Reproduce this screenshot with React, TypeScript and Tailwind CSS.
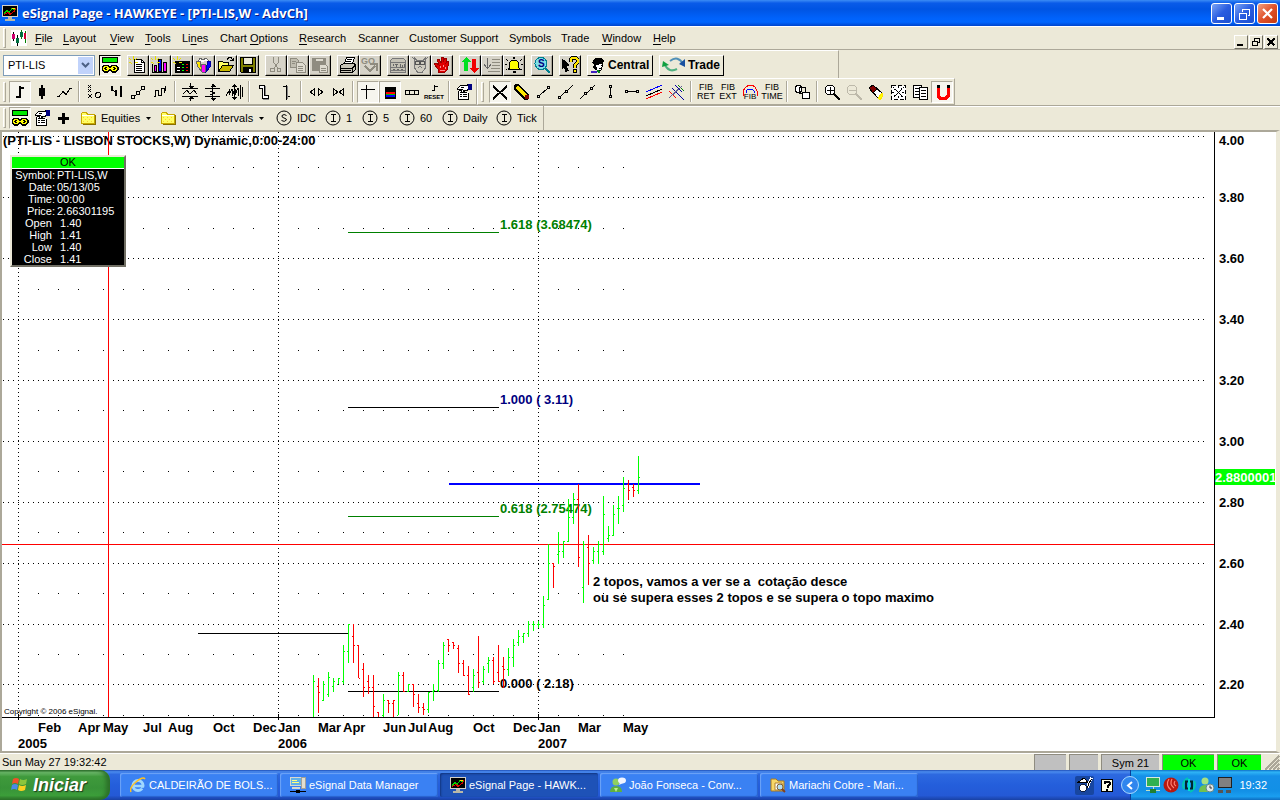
import React from "react";

type Kids = { children?: React.ReactNode };

/* ---------- drawing helpers ---------- */

function Ic({ children, w = 18, h = 18 }: Kids & { w?: number; h?: number }) {
  return (
    <svg width={w} height={h} viewBox={`0 0 ${w} ${h}`} fill="none" stroke="#000" shapeRendering="crispEdges" className="shrink-0" aria-hidden="true">
      {children}
    </svg>
  );
}

const spark = (
  <path d="M0 2l2 2M4 0v4M8 2L6 4M0 6h2M2 8l1-1M6 6h3" stroke="#e8e000" />
);

const linkIcon = (
  <Ic>
    <rect x="1.5" y="1.5" width="15" height="5" fill="#00e800" />
    <path d="M3 9h4l2 2 2-2h4l2 2v3l-2 2h-4l-2-2-2 2H3l-2-2v-3z" fill="#000" />
    <path d="M3.500 10.500h3l1 2-1 2h-3l-1-2zM11.500 10.500h3l1 2-1 2h-3l-1-2zM5 12.500h8" stroke="#ffff00" />
  </Ic>
);

const propsIcon = (
  <Ic>
    <path d="M3.500 7.500v9h10v-7M3.500 7.500h4" fill="#fff" />
    <path d="M5 9.500h2M8 9.500h4M5 11.500h2M8 11.500h4M5 13.500h2M8 13.500h4" />
    <path d="M2.500 5.500l3-3h6l2-1v5l-2 1h-3l1 2h-2l-2-3h-3z" fill="#fff" />
    <path d="M6 4.500h3M6 6.500h2" />
    <rect x="13.500" y="1.500" width="3" height="5" fill="#000080" stroke="#000080" />
  </Ic>
);

const folderIcon = (
  <Ic w={16} h={14}>
    <path d="M1.500 12.500v-10l1-1h4l1 2h7v9z" fill="#ffff66" stroke="#c9a800" />
    <path d="M2 4.500h12" stroke="#fff" />
    <path d="M3 6h1M5 8h1M7 6h1M9 8h1M11 6h1M3 10h1M7 10h1M11 10h1" stroke="#ffcc33" />
    <path d="M15.500 4v9.500h-13" stroke="#8a7000" />
  </Ic>
);

const appIcon = (
  <Ic w={16} h={16}>
    <rect x="0.500" y="0.500" width="15" height="11" fill="#000" stroke="#d4d0c8" />
    <path d="M2 8.500l3-3 2 2 3-4 3 1" stroke="#00d000" />
    <path d="M2 9.500l4-2 2 2 4-3 2-3" stroke="#e00000" />
    <path d="M10 3.500h3" stroke="#ffe000" />
    <path d="M6 12.500h4M3 14.500h10" stroke="#b8b8a8" strokeWidth="2" />
  </Ic>
);

/* ---------- toolbar pieces ---------- */

function Raised({ label, children, on }: Kids & { label: string; on?: boolean }) {
  return (
    <button
      type="button"
      aria-label={label}
      aria-pressed={on}
      className={
        on
          ? "flex h-[21px] w-[22px] shrink-0 items-center justify-center border border-t-black border-l-black border-b-white border-r-white bg-[#f5f3ea]"
          : "flex h-[21px] w-[22px] shrink-0 items-center justify-center border border-t-white border-l-white border-b-black border-r-black bg-[#d6d3c8] shadow-[inset_-1px_-1px_0_#aca899]"
      }
    >
      {children}
    </button>
  );
}

function Flat({ label, children, on }: Kids & { label: string; on?: boolean }) {
  return (
    <button
      type="button"
      aria-label={label}
      aria-pressed={on}
      className={
        on
          ? "flex h-[22px] w-[22px] shrink-0 items-center justify-center border border-t-[#aca899] border-l-[#aca899] border-b-white border-r-white bg-[#f6f5ee]"
          : "flex h-[22px] w-[22px] shrink-0 items-center justify-center"
      }
    >
      {children}
    </button>
  );
}

const Sep = () => (
  <span className="flex w-2 shrink-0 justify-center">
    <span className="h-[21px] w-0.5 border-l border-[#aca899] border-r border-r-white" />
  </span>
);

const Grip = () => <span className="h-[20px] w-[3px] shrink-0 border border-t-white border-l-white border-b-[#aca899] border-r-[#aca899]" />;

/* ---------- toolbar 1 icons ---------- */

const grey = "#8f8c80";

const mainTools: { label: string; icon: React.ReactNode }[][] = [
  [
    { label: "New page", icon: <Ic><path d="M5.500 3.500h7l3 3v10h-10z" fill="#fff" /><path d="M12.500 3.500v3h3M7 8.500h6M7 10.500h6M7 12.500h6M7 14.500h6" />{spark}</Ic> },
    { label: "New chart", icon: <Ic><path d="M1.500 8v9M1 16.500h15" /><rect x="3.500" y="9.500" width="2" height="6" fill="#ff00ff" /><rect x="7.500" y="3.500" width="3" height="12" fill="#0000ff" /><rect x="12.500" y="6.500" width="3" height="9" fill="#ff00ff" />{spark}</Ic> },
    { label: "New quote window", icon: <Ic><rect x="2" y="5" width="15" height="12" fill="#000" stroke="none" /><path d="M9 8.500h2M9 11.500h2M9 14.500h2" stroke="#00ff00" /><path d="M13 8.500h2M13 11.500h2M13 14.500h2" stroke="#ff0000" /><path d="M4 11.500h3M4 14.500h3" stroke="#fff" />{spark}</Ic> },
    { label: "Styles", icon: <Ic><path d="M3 6l2-4 3 2 3-2 3 3" fill="#fff" stroke="#666" /><path d="M1 5h4l2 11-4-5z" fill="#ffe600" stroke="#666" /><path d="M6 8h5l-1 8H7z" fill="#ff00ff" stroke="#666" /><path d="M12 5h4l-1 6-4 5 1-7z" fill="#0000ff" stroke="#0000a0" /></Ic> },
    { label: "Open", icon: <Ic><path d="M1.500 15.500v-10h4l1 1h5v3" fill="#ffff66" /><path d="M1.500 15.500l4-6h11l-4 6z" fill="#c8b800" /><path d="M10 3.500l2-2h2l2 3M13 4.500h3v-3" /></Ic> },
    { label: "Save", icon: <Ic><path d="M1.500 1.500h15v15h-14l-1-1z" fill="#808000" /><rect x="4.500" y="1.500" width="9" height="7" fill="#ece9d8" /><rect x="4.500" y="11.500" width="9" height="5" fill="#000" /><path d="M11 13v3" stroke="#fff" strokeWidth="2" /></Ic> },
  ],
  [
    { label: "Cut", icon: <Ic><path d="M6.500 1v5l4 6M11.500 1v5l-4 6" stroke={grey} /><circle cx="5.500" cy="14" r="2" stroke={grey} /><circle cx="12" cy="14" r="2" stroke={grey} /></Ic> },
    { label: "Copy", icon: <Ic><path d="M1.500 2.500h6l2 2v7h-8z" fill="#c0bdb0" stroke={grey} /><path d="M7.500 6.500h6l3 3v7h-9z" fill="#dedbd0" stroke={grey} /><path d="M9 10.500h5M9 12.500h5M9 14.500h5M3 5.500h4M3 7.500h3" stroke={grey} /></Ic> },
    { label: "Paste", icon: <Ic><rect x="1.500" y="2.500" width="13" height="12" fill={grey} stroke={grey} /><path d="M5 3.500h7" stroke="#dedbd0" strokeWidth="2" /><path d="M8.500 8.500h6l2 2v6h-8z" fill="#dedbd0" stroke={grey} /><path d="M10 12.500h5M10 14.500h5" stroke={grey} /></Ic> },
  ],
  [
    { label: "Print", icon: <Ic><path d="M5.500 7.500l2-6h8l-2 6" fill="#fff" /><path d="M8 3.500h5M7 5.500h5" /><path d="M1.500 9.500l3-2h10l2 1v5l-3 3h-12z" fill="#c8c5b8" /><path d="M2 12.500h11l3-3M2 14.500h10M13.500 12v4" /></Ic> },
    { label: "Go", icon: <Ic><text x="0" y="8" fontSize="9" fontWeight="bold" fontFamily="Liberation Sans, sans-serif" fill={grey} stroke="none">GO</text><path d="M4 10l5 5 5-5M9 8h7v7" stroke={grey} strokeWidth="2" /></Ic> },
  ],
  [
    { label: "Quote board", icon: <Ic><path d="M1.500 4.500l2-2h11l2 2v12h-15z" fill="#c5c2b6" stroke="#777" /><path d="M2 6.500h14M2 11.500h14M2 14.500h14" stroke="#777" /><path d="M4 8v2M6 8h3M7.500 8v3M11 8v3h2V9M15 8v3M4 13.500h2M8 13.500h2M12 13.500h2" stroke="#666" /></Ic> },
    { label: "Owl", icon: <Ic><path d="M3.500 2l2 2h7l2-2v10l-3 4h-5l-3-4z" fill="#cfccc0" stroke="#777" /><circle cx="6.500" cy="7" r="2" stroke="#555" /><circle cx="11.500" cy="7" r="2" stroke="#555" /><path d="M7 12l2-2 2 2M1 1l3 3M17 1l-3 3" stroke="#777" /></Ic> },
    { label: "Stop", icon: <Ic><path d="M5 16V13L1 8l2-1 3 2-2-6h2l2 4V1h2v5l2-4h2l-1 5 2-2 1 1-2 8-2 2z" fill="#e00000" stroke="#900" /><path d="M7 10v2M10 9v2M12 11v2M7 14h5" stroke="#ff9090" /></Ic> },
  ],
  [
    { label: "Up and down", icon: <Ic><path d="M5 1l5 5H7v9H3V6H0z" fill="#00e020" stroke="none" /><path d="M13 17l5-5h-3V3h-4v9H8z" fill="#f00000" stroke="none" /></Ic> },
    { label: "Sort list", icon: <Ic><path d="M4.500 2v10M1 8.500l3.500 4L8 8.500" stroke="#666" /><path d="M9 3.500h8M9 6.500h8M9 9.500h8M8 12.500h9M5 15.500h12" stroke={grey} /></Ic> },
    { label: "Alerts", icon: <Ic><path d="M3.500 13.500l1-2V7l2-3h5l2 3v4.500l2 2z" fill="#ffff00" /><path d="M9 1v2M8 15.500h3" strokeWidth="2" /><path d="M1 3l2 2M17 3l-2 2M0 8.500h2M16 8.500h2M1 14l1-1M17 14l-1-1" /></Ic> },
  ],
  [{ label: "Symbol search", icon: <Ic><circle cx="8" cy="7.500" r="6" fill="#7fdfe8" stroke="#008090" /><path d="M12 12l5 5" stroke="#008090" strokeWidth="2" /><text x="5" y="11" fontSize="10" fontWeight="bold" fontFamily="Liberation Sans, sans-serif" fill="#000080" stroke="none">S</text></Ic> }],
  [{ label: "Context help", icon: <Ic><path d="M1 3l7 6-3 .5 2 5-2 1-2-5-2 2z" fill="#000" /><path d="M9.500 6V3.500l2-2h3l2 2v3l-3 3v2" stroke="#000" strokeWidth="4" /><path d="M9.500 6V3.500l2-2h3l2 2v3l-3 3v2" stroke="#ffe600" strokeWidth="2" /><rect x="12.500" y="13.500" width="3" height="3" fill="#ffe600" /></Ic> }],
];

/* ---------- toolbar 2 icons ---------- */

const fib = (a: string, b: string) => (
  <span className="flex flex-col items-center font-['Liberation_Sans_Narrow','Liberation_Sans',sans-serif] text-[9px] leading-[9px] text-black">
    <span>{a}</span>
    <span>{b}</span>
  </span>
);

type T = { label: string; icon: React.ReactNode; on?: boolean };

const styleTools: T[][] = [
  [
    { label: "Bar chart", on: true, icon: <Ic><path d="M9 3v12M5 14h4M9 5h4" strokeWidth="2" /></Ic> },
    { label: "Candle chart", icon: <Ic><rect x="6" y="5" width="6" height="8" fill="#000" stroke="none" /><path d="M9 2v14" strokeWidth="2" /></Ic> },
    { label: "Line chart", icon: <Ic><path d="M2 13.500h2l4-5 3 3 4-6h2" /></Ic> },
  ],
  [
    { label: "Point and figure", icon: <Ic><path d="M3 2l3 3M6 2L3 5M3 6l3 3M6 6l-3 3M3 11l4 4M7 11l-4 4" /><circle cx="13" cy="12" r="2.500" /></Ic> },
    { label: "Histogram lines", icon: <Ic><path d="M5 3v5M9 7v6M14 3v11" strokeWidth="2" /><path d="M6 7l3 3" /></Ic> },
    { label: "Swing", icon: <Ic><rect x="2.500" y="12.500" width="3" height="3" /><rect x="7.500" y="8.500" width="3" height="3" /><rect x="12.500" y="3.500" width="3" height="3" /><path d="M6 13l2-2M10 9l2-2" /></Ic> },
    { label: "Step", icon: <Ic><path d="M3 13.500h1.500v-6h3v5h3v-7h3v4M13.500 7.500h1V3" /></Ic> },
  ],
  [
    { label: "Compress vertical", icon: <Ic><path d="M1 5.500h16M1 13.500h16M2 11l4-4 3 4 4-4 3 4M9.500 0v4M9.500 18v-4" /><path d="M7 3h6l-3 3zM7 16h6l-3-3z" fill="#000" stroke="none" /></Ic> },
    { label: "Expand vertical", icon: <Ic><path d="M2 5.500h15M2 13.500h15M9.500 1v16M7 8l5 2-5 2" /><path d="M7 4h6l-3-3zM7 15h6l-3 3z" fill="#000" stroke="none" /></Ic> },
    { label: "Auto scale", icon: <Ic><path d="M1 13l3-5v4l3-6v7l3-7v6l3-7v8M15.500 2v14M17.500 4v10M9.500 2v14" /><path d="M7 4h5L9.500 1zM7 14h5l-2.500 3z" fill="#000" stroke="none" /></Ic> },
  ],
  [
    { label: "Wide bars", icon: <Ic><path d="M4.500 2.500h5v10h4v3h-6v-10h-3z" fill="#fff" /><path d="M10.500 3v9M8 16.500h6" stroke="#888" /></Ic> },
    { label: "Thin bars", icon: <Ic><path d="M9.500 2v15M6 3.500h3M10 13.500h3" /><path d="M10.500 3v13" stroke="#888" /></Ic> },
  ],
  [
    { label: "Spread bars", icon: <Ic><path d="M7.500 5.500v7l-4-3.500zM11.500 5.500v7l4-3.500z" /></Ic> },
    { label: "Narrow bars", icon: <Ic><path d="M4.500 5.500v7l4-3.500zM14.500 5.500v7l-4-3.500z" /></Ic> },
  ],
  [
    { label: "Crosshair", on: true, icon: <Ic><path d="M2 6.500h14M7.500 2v14" /></Ic> },
    { label: "Colours", on: true, icon: <Ic><rect x="4" y="4" width="11" height="12" fill="#000" stroke="none" /><rect x="5" y="9" width="9" height="2" fill="#ff0000" stroke="none" /><rect x="5" y="11" width="9" height="1" fill="#00c000" stroke="none" /><rect x="5" y="12" width="9" height="2" fill="#0000ff" stroke="none" /></Ic> },
    { label: "Panels", icon: <Ic><path d="M2.500 7.500h13v4h-13zM6.500 8v3M11.500 8v3" /></Ic> },
    { label: "Reset", icon: <Ic w={22}><path d="M11.500 2v6M9 7.500h2M12 3.500h3" /><text x="11" y="16" fontSize="6" fontWeight="bold" textAnchor="middle" fontFamily="Liberation Sans Narrow, Liberation Sans, sans-serif" fill="#000" stroke="none">RESET</text></Ic> },
  ],
  [{ label: "Properties", icon: propsIcon }],
];

const drawTools: T[][] = [
  [
    { label: "Pointer", on: true, icon: <Ic><path d="M2 3l14 13M16 3L2 16" strokeWidth="2" /></Ic> },
    { label: "Pencil", icon: <Ic><path d="M2 1h3l11 11v3l-2 2h-3L1 6V3z" fill="#000" stroke="none" /><path d="M4 4l9 9" stroke="#ffe600" strokeWidth="4" /><rect x="12" y="12" width="4" height="4" fill="#800000" stroke="none" /></Ic> },
    { label: "Segment", icon: <Ic><rect x="2.500" y="12.500" width="2" height="2" /><rect x="12.500" y="3.500" width="2" height="2" /><path d="M5 12l7-6" /></Ic> },
    { label: "Ray", icon: <Ic><rect x="1.500" y="13.500" width="2" height="2" /><rect x="8.500" y="7.500" width="2" height="2" /><path d="M4 13l4-4M11 7l5-5" /></Ic> },
    { label: "Line", icon: <Ic><path d="M1 16l4-4M8 10l3-3M13 5l3-3" /><rect x="5.500" y="9.500" width="2" height="2" /><rect x="11.500" y="4.500" width="2" height="2" /></Ic> },
    { label: "Vertical line", icon: <Ic><rect x="8.500" y="2.500" width="2" height="2" /><rect x="8.500" y="12.500" width="2" height="2" /><path d="M9.500 5v8" /></Ic> },
    { label: "Horizontal line", icon: <Ic><rect x="2.500" y="7.500" width="2" height="2" /><rect x="13.500" y="7.500" width="2" height="2" /><path d="M5 8.500h8" /></Ic> },
    { label: "Regression", icon: <Ic><path d="M1 9l16-7" stroke="#0000ff" /><path d="M1 13l16-7" stroke="#000" /><path d="M1 16l16-7" stroke="#ff0000" /></Ic> },
    { label: "Pitchfork", icon: <Ic><path d="M2 8l7 7" stroke="#ff0000" /><path d="M5 5l12 12M8 2l7 7" stroke="#0000a0" /><path d="M11 2l6 6" stroke="#008000" /><path d="M2 15L15 3" stroke="#606090" /></Ic> },
  ],
  [
    { label: "Fibonacci retracement", icon: fib("FIB", "RET") },
    { label: "Fibonacci extension", icon: fib("FIB", "EXT") },
    { label: "Fibonacci circle", icon: <Ic><path d="M2 13V8l3-4 3-2h3l3 2 2 4v5" stroke="#ff0000" /><path d="M5 10V8l2-2h4l2 2v2" stroke="#0000ff" /><text x="9" y="16" fontSize="8" textAnchor="middle" fontFamily="Liberation Sans Narrow, Liberation Sans, sans-serif" fill="#000" stroke="none">FIB</text></Ic> },
    { label: "Fibonacci time", icon: fib("FIB", "TIME") },
  ],
  [{ label: "Shapes", icon: <Ic><circle cx="5.500" cy="6" r="3.500" fill="#fff" /><rect x="6.500" y="4.500" width="6" height="6" /><rect x="9.500" y="9.500" width="7" height="6" fill="#fff" /></Ic> }],
  [
    { label: "Zoom in", icon: <Ic><circle cx="7" cy="7" r="5" fill="#fff" /><path d="M4 7.500h7M7.500 4v7" /><path d="M11 11l6 6" strokeWidth="2" /></Ic> },
    { label: "Zoom out", icon: <Ic><circle cx="7" cy="7" r="5" stroke="#bdb9aa" /><path d="M4 7.500h7" stroke="#bdb9aa" /><path d="M11 11l6 6" stroke="#bdb9aa" strokeWidth="2" /></Ic> },
    { label: "Eraser", icon: <Ic><path d="M2 5l4-3 10 9-4 5z" fill="#fff" /><path d="M2 5l4-3 4 4-4 4z" fill="#800000" /><path d="M11 15l4-5 1 3-3 4z" fill="#ffff00" stroke="#ffe600" /></Ic> },
    { label: "Tile", icon: <Ic><rect x="2.500" y="2.500" width="14" height="14" fill="#fff" strokeDasharray="4 2" /><path d="M4 4l11 11M15 4L4 15M9.500 3v3M9.500 13v3M3 9.500h3M13 9.500h3M5 7l2-2M12 5l2 2M5 12l2 2M12 14l2-2" strokeDasharray="2 1" /></Ic> },
    { label: "Copy notes", icon: <Ic><path d="M2.500 2.500h8v12h-8z" fill="#fff" /><path d="M4 5h5M4 8h4M4 11h4" /><path d="M8.500 4.500h8v12h-8z" fill="#fff" /><path d="M10 8l2-1h3M10 11l2-1h3M10 14l2-1h3" /></Ic> },
    { label: "Magnet", on: true, icon: <Ic><path d="M5 3v10l2 2h6l2-2V3" stroke="#ff0000" strokeWidth="3" /><path d="M5 2v3M15 2v3" strokeWidth="3" /></Ic> },
  ],
];

function ToolGroups({ groups }: { groups: T[][] }) {
  return (
    <>
      {groups.map((g, i) => (
        <React.Fragment key={i}>
          {i > 0 && <Sep />}
          {g.map((t) => (
            <Flat key={t.label} label={t.label} on={t.on}>{t.icon}</Flat>
          ))}
        </React.Fragment>
      ))}
    </>
  );
}

/* ---------- header ---------- */

function TitleBar() {
  return (
    <header className="flex h-[26px] shrink-0 items-center bg-[linear-gradient(180deg,#3c8cf5_0%,#0a5be8_12%,#0054e3_35%,#0062fb_70%,#0066ff_85%,#0045cc_100%)] pr-0.5 pl-0.5">
      {appIcon}
      <h1 className="flex-1 pl-1 font-['Open_Sans','Noto_Sans',sans-serif] text-[13px] leading-[20px] font-bold text-white [text-shadow:1px_1px_0_#0a1883]">
        eSignal Page - HAWKEYE - [PTI-LIS,W - AdvCh]
      </h1>
      <div className="flex gap-0.5">
        <button type="button" aria-label="Minimize" className="flex size-[21px] items-center justify-center rounded-[3px] border border-white bg-[linear-gradient(135deg,#7ba4f5,#2a5de0_50%,#1c4fd0)]">
          <Ic w={15} h={15}><path d="M3 12.500h7" stroke="#fff" strokeWidth="3" /></Ic>
        </button>
        <button type="button" aria-label="Restore" className="flex size-[21px] items-center justify-center rounded-[3px] border border-white bg-[linear-gradient(135deg,#7ba4f5,#2a5de0_50%,#1c4fd0)]">
          <Ic w={15} h={15}><path d="M5 3h8M5.500 3v3M12.500 3v6h-2M2 7h8M2.500 7v6h7V7" stroke="#fff" /></Ic>
        </button>
        <button type="button" aria-label="Close" className="flex size-[21px] items-center justify-center rounded-[3px] border border-white bg-[linear-gradient(135deg,#f0a080,#e0512a_50%,#c53a10)]">
          <svg width="15" height="15" viewBox="0 0 15 15" aria-hidden="true"><path d="M3 3l9 9M12 3l-9 9" stroke="#fff" strokeWidth="2.200" /></svg>
        </button>
      </div>
    </header>
  );
}

const menus: [string, string, string, string][] = [
  ["", "F", "ile", "w-[28px]"],
  ["", "L", "ayout", "w-[47px]"],
  ["", "V", "iew", "w-[35px]"],
  ["", "T", "ools", "w-[37px]"],
  ["Li", "n", "es", "w-[38px]"],
  ["Chart ", "O", "ptions", "w-[79px]"],
  ["", "R", "esearch", "w-[59px]"],
  ["Scanner", "", "", "w-[51px]"],
  ["Customer Support", "", "", "w-[100px]"],
  ["Symbols", "", "", "w-[52px]"],
  ["Trade", "", "", "w-[41px]"],
  ["", "W", "indow", "w-[51px]"],
  ["", "H", "elp", "w-[28px]"],
];

const mdiBtn = "flex size-[14px] items-center justify-center border border-t-white border-l-white border-b-[#716f64] border-r-[#716f64]";

function MenuBar() {
  return (
    <nav className="flex h-[24px] shrink-0 items-center border-t border-b border-t-white border-b-[#aca899] pr-0.5 pl-[3px]">
      <Grip />
      <span className="ml-[5px] mr-2 flex bg-white">
        <Ic w={16} h={16}>
          <path d="M2.500 2v9M6.500 5v11" stroke="#000" /><path d="M10.500 0v9M14.500 1v12" stroke="#008000" />
          <path d="M2.500 4v5" stroke="#d0006f" strokeWidth="3" /><path d="M6.500 8v5M10.500 2v5" stroke="#007040" strokeWidth="3" /><path d="M14 3v6" stroke="#d00030" strokeWidth="2" />
        </Ic>
      </span>
      <ul className="flex flex-1">
        {menus.map(([a, u, b, w]) => (
          <li key={a + u + b} className={w + " shrink-0"}>
            <button type="button" className="whitespace-pre">{a}{u && <span className="underline underline-offset-2">{u}</span>}{b}</button>
          </li>
        ))}
      </ul>
      <div className="flex gap-px self-end">
        <button type="button" aria-label="Minimize chart" className={mdiBtn}><Ic w={10} h={10}><path d="M1 8h6" strokeWidth="2" /></Ic></button>
        <button type="button" aria-label="Restore chart" className={mdiBtn}><Ic w={10} h={10}><path d="M3 1h6M3.500 1v3M8.500 1v4h-2M1 4.500h5v4h-4.500v-4" /></Ic></button>
        <button type="button" aria-label="Close chart" className={mdiBtn}><Ic w={10} h={10}><path d="M1.500 1.500l7 7M8.500 1.500l-7 7" strokeWidth="2" /></Ic></button>
      </div>
    </nav>
  );
}

function MainToolbar() {
  return (
    <div className="flex h-[28px] shrink-0">
      <div role="toolbar" aria-label="Main" className="flex w-[839px] items-center gap-[6px] border-t border-r border-t-white border-r-[#aca899] pt-px pl-[3px]">
        <div className="flex items-center gap-1">
          <div className="relative">
            <select aria-label="Symbol" defaultValue="PTI-LIS" className="h-[21px] w-[92px] appearance-none border border-[#7f9db9] bg-white pl-1 text-[11px] leading-[19px] text-black">
              <option>PTI-LIS</option>
            </select>
            <span className="pointer-events-none absolute top-0.5 right-0.5 flex h-[17px] w-[15px] items-center justify-center bg-[#c1d3fb]">
              <svg width="9" height="7" viewBox="0 0 9 7" aria-hidden="true"><path d="M1 1l3.500 3.500L8 1" fill="none" stroke="#4d6185" strokeWidth="2" /></svg>
            </span>
          </div>
          <Raised label="Link" on>{linkIcon}</Raised>
        </div>
        {mainTools.map((g, i) => (
          <div key={i} className="flex">
            {g.map((t) => (
              <Raised key={t.label} label={t.label}>{t.icon}</Raised>
            ))}
          </div>
        ))}
        <button type="button" className="flex h-[21px] w-[66px] items-center gap-0.5 border border-t-white border-l-white border-b-black border-r-black pl-0.5 font-['Liberation_Sans',sans-serif] text-[12px] leading-[16px] font-bold">
          <Ic w={16} h={16}>
            <path d="M5 6h7v4l-1 3H7L5 10z" fill="#fff" />
            <path d="M3 4l2-3h6l3 2v2l-2 1h-2L8 8H6l1 3-2 2-2-3 1-2-2-2z" fill="#000" stroke="none" />
            <path d="M11 8.500h1M9 11.500h2" />
            <path d="M1 15h6" stroke="#4020c0" strokeWidth="2" /><path d="M7 14l3 1" stroke="#008020" strokeWidth="2" />
          </Ic>
          Central
        </button>
        <button type="button" className="flex h-[21px] w-[65px] items-center gap-0.5 border border-t-white border-l-white border-b-black border-r-black pl-0.5 font-['Liberation_Sans',sans-serif] text-[12px] leading-[16px] font-bold">
          <svg width="24" height="16" viewBox="0 0 24 16" fill="none" aria-hidden="true" className="shrink-0">
            <path d="M3 8q4 8 12 4" stroke="#50b080" strokeWidth="2" /><path d="M0 10l1-6 6 4z" fill="#10a040" />
            <path d="M8 4q8-6 13 3" stroke="#5090b8" strokeWidth="2" /><path d="M23 2v8l-6-3z" fill="#1850a0" />
          </svg>
          Trade
        </button>
      </div>
    </div>
  );
}

function ChartToolbar() {
  return (
    <div className="flex h-[27px] shrink-0">
      <div role="toolbar" aria-label="Chart style" className="flex items-center gap-[3px] border-t border-r border-b border-t-white border-r-[#aca899] border-b-[#aca899] pr-px pl-[3px]">
        <Grip />
        <div className="flex"><ToolGroups groups={styleTools} /></div>
      </div>
      <div role="toolbar" aria-label="Drawing" className="flex items-center gap-[5px] border border-t-white border-l-white border-b-[#aca899] border-r-[#aca899] pr-px pl-[3px]">
        <Grip />
        <div className="flex"><ToolGroups groups={drawTools} /></div>
      </div>
    </div>
  );
}

const intervals: { kind: "folder" | "S" | "I"; text: string; w: string }[] = [
  { kind: "folder", text: "Equities", w: "w-[80px]" },
  { kind: "folder", text: "Other Intervals", w: "w-[116px]" },
  { kind: "S", text: "IDC", w: "w-[49px]" },
  { kind: "I", text: "1", w: "w-[37px]" },
  { kind: "I", text: "5", w: "w-[37px]" },
  { kind: "I", text: "60", w: "w-[43px]" },
  { kind: "I", text: "Daily", w: "w-[54px]" },
  { kind: "I", text: "Tick", w: "w-[47px]" },
];

function IntervalBar() {
  return (
    <div className="flex h-[25px] shrink-0 border-t border-t-[#aca899] shadow-[inset_0_1px_0_#fff]">
      <div role="toolbar" aria-label="Intervals" className="flex items-center border-r border-[#aca899] pl-[3px]">
        <Grip />
        <span className="flex w-[74px] items-center pl-[3px]">
          <Flat label="Link chart" on>{linkIcon}</Flat>
          <Flat label="Chart properties">{propsIcon}</Flat>
          <Flat label="Add"><Ic><path d="M3 9h11M8.500 4v11" strokeWidth="3" /></Ic></Flat>
        </span>
        {intervals.map((t) => (
          <button key={t.text} type="button" className={t.w + " flex shrink-0 items-center gap-[5px]"}>
            {t.kind === "folder" ? (
              folderIcon
            ) : (
              <svg width="16" height="16" viewBox="0 0 16 16" aria-hidden="true" fill="none" stroke="#000">
                <circle cx="8" cy="8" r="7" />
                {t.kind === "I" ? <path d="M5.500 4.500h5M5.500 11.500h5M8 4.500v7" shapeRendering="crispEdges" /> : <path d="M10.500 5.500Q8 3.500 6 5.500q-.5 2 2 2.500t2.500 2Q8.500 12.500 5.500 10.500" />}
              </svg>
            )}
            <span>{t.text}</span>
            {t.kind === "folder" && <svg width="5" height="3" viewBox="0 0 5 3" aria-hidden="true" className="ml-px"><path d="M0 0h5L2.500 3z" /></svg>}
          </button>
        ))}
      </div>
    </div>
  );
}

/* ---------- chart ---------- */

const months = [38, 58, 78, 103, 123, 143, 168, 188, 213, 233, 253, 298, 318, 343, 363, 383, 408, 428, 448, 473, 493, 513, 558, 578, 603, 623];
const majors = [136, 197, 258, 319, 380, 441, 502, 563, 624, 684];
const minors = [167, 228, 289, 350, 410, 471, 532, 593, 654, 715];
const prices = ["4.00", "3.80", "3.60", "3.40", "3.20", "3.00", "2.80", "2.60", "2.40", "2.20"];

/* high, low, open, close (chart rows), rising; one bar each 5px from x = 313 */
const bars: [number, number, number, number, 0 | 1][] = [
  [675, 717, 717, 681, 1], [678, 713, 686, 692, 0], [681, 701, 700, 684, 1], [672, 697, 694, 677, 1], [678, 692, 686, 681, 1],
  [678, 684, 684, 678, 1], [645, 684, 681, 651, 1], [624, 663, 651, 624, 1], [624, 663, 636, 645, 0], [645, 678, 645, 678, 0],
  [663, 697, 669, 687, 0], [675, 694, 681, 687, 0], [675, 717, 687, 706, 0], [712, 717, 712, 717, 0], [694, 717, 715, 700, 1],
  [700, 713, 700, 703, 0], [700, 717, 703, 700, 0], [672, 715, 715, 675, 1], [672, 692, 675, 691, 0], [684, 692, 691, 684, 1],
  [684, 707, 684, 694, 0], [694, 713, 703, 707, 0], [703, 715, 707, 709, 0], [692, 713, 709, 692, 1], [684, 701, 691, 690, 1],
  [660, 692, 690, 663, 1], [642, 669, 663, 645, 1], [639, 652, 639, 645, 0], [642, 649, 642, 645, 0], [645, 673, 648, 663, 0],
  [660, 676, 663, 675, 0], [666, 695, 675, 694, 0], [669, 692, 687, 675, 1], [636, 688, 672, 682, 0], [666, 684, 681, 669, 1],
  [657, 673, 663, 660, 1], [657, 684, 660, 681, 0], [645, 682, 672, 681, 0], [657, 688, 666, 669, 0], [648, 676, 669, 657, 1],
  [639, 667, 657, 645, 1], [630, 646, 642, 636, 1], [633, 643, 636, 633, 1], [621, 637, 633, 624, 1], [621, 631, 624, 624, 1],
  [621, 628, 624, 624, 1], [596, 628, 624, 605, 1], [544, 600, 599, 563, 1], [563, 588, 563, 566, 0], [532, 564, 554, 551, 1],
  [541, 558, 551, 541, 1], [499, 542, 541, 517, 1], [493, 524, 517, 499, 1], [484, 567, 499, 557, 0], [541, 603, 587, 544, 1],
  [535, 585, 547, 563, 0], [547, 564, 560, 551, 1], [541, 564, 551, 544, 1], [496, 555, 551, 514, 1], [526, 542, 538, 535, 1],
  [505, 536, 535, 514, 1], [496, 524, 508, 508, 1], [477, 512, 505, 488, 1], [480, 500, 484, 490, 0], [484, 497, 487, 490, 0],
  [456, 494, 490, 477, 1],
];

const monthLabels: [number, string][] = [
  [38, "Feb"], [78, "Apr"], [103, "May"], [143, "Jul"], [168, "Aug"], [213, "Oct"], [253, "Dec"], [278, "Jan"], [318, "Mar"], [343, "Apr"],
  [383, "Jun"], [408, "Jul"], [428, "Aug"], [473, "Oct"], [513, "Dec"], [538, "Jan"], [578, "Mar"], [623, "May"],
];

const readout: [string, string][] = [
  ["Symbol:", "PTI-LIS,W"], ["Date:", "05/13/05"], ["Time:", "00:00"], ["Price:", "2.66301195"],
  ["Open ", " 1.40"], ["High ", " 1.41"], ["Low ", " 1.40"], ["Close ", " 1.41"],
];

function Chart() {
  return (
    <main className="relative flex min-h-[620px] flex-1 items-stretch overflow-hidden border-t-2 border-r-4 border-b-2 border-l-2 border-t-[#aca899] border-r-[#ece9d8] border-b-[#aca899] border-l-[#aca899] bg-white">
      <svg className="h-auto min-w-0 flex-1" role="img" aria-label="PTI-LIS weekly price chart" fontFamily="Liberation Sans, Arial, sans-serif" fontSize="13" fontWeight="bold">
        <defs>
          <pattern id="dots-h" width="5" height="1" patternUnits="userSpaceOnUse" x="3"><rect width="1" height="1" /></pattern>
          <pattern id="dots-v" width="1" height="4" patternUnits="userSpaceOnUse"><rect width="1" height="1" /></pattern>
        </defs>
        <g transform="translate(-2 -132)" shapeRendering="crispEdges">
          {majors.map((y) => (
            <rect key={y} x="3" y={y} height="1" className="w-[calc(100%-8px)]" fill="url(#dots-h)" />
          ))}
          {[18, 278, 538].map((x) => (
            <g key={x}>
              <rect x={x} y="132" width="1" height="586" fill="url(#dots-v)" />
              <rect x={x} y="714" width="1" height="6" />
            </g>
          ))}
          {minors.map((y) => months.map((x) => <rect key={x + "-" + y} x={x} y={y} width="1" height="1" />))}
        </g>
        <g transform="translate(-2 -132)">
          <text x="3" y="145">(PTI-LIS - LISBON STOCKS,W) Dynamic,0:00-24:00</text>
          <text x="500" y="229" fill="#008000">1.618 (3.68474)</text>
          <text x="500" y="404" fill="#000080" xmlSpace="preserve">1.000 ( 3.11)</text>
          <text x="500" y="513" fill="#008000">0.618 (2.75474)</text>
          <text x="500" y="688" xmlSpace="preserve">0.000 ( 2.18)</text>
          <text x="593" y="586" className="whitespace-pre">{"2 topos, vamos a ver se a  cotação desce"}</text>
          <text x="593" y="602">ou se supera esses 2 topos e se supera o topo maximo</text>
          <text x="4" y="714" fontSize="8" fontWeight="normal">Copyright © 2006 eSignal.</text>
          {monthLabels.map(([x, t]) => (
            <text key={x} x={x} y="732">{t}</text>
          ))}
          <text x="18" y="748">2005</text>
          <text x="278" y="748">2006</text>
          <text x="538" y="748">2007</text>
        </g>
        <g transform="translate(-2 -132)" shapeRendering="crispEdges">
          <rect x="108" y="132" width="1" height="586" fill="#ff0000" />
          <rect x="2" y="544" width="100%" height="1" fill="#ff0000" />
          <rect x="198" y="633" width="151" height="1" />
          <rect x="348" y="691" width="151" height="1" />
          <rect x="348" y="407" width="151" height="1" />
          <rect x="348" y="232" width="151" height="1" fill="#008000" />
          <rect x="348" y="516" width="151" height="1" fill="#008000" />
          <rect x="449" y="483" width="251" height="2" fill="#0000ff" />
          {bars.map(([hi, lo, o, c, up], i) => {
            const x = 313 + i * 5;
            return (
              <g key={x} fill={up ? "#00ff00" : "#ff0000"}>
                <rect x={x} y={hi} width="1" height={lo - hi} />
                {o < 717 && <rect x={x - 1} y={o} width="1" height="1" />}
                {c < 717 && <rect x={x + 1} y={c} width="1" height="1" />}
              </g>
            );
          })}
          <rect x="2" y="717" width="100%" height="1" />
        </g>
      </svg>
      <svg className="h-auto w-[62px] shrink-0" role="img" aria-label="Price axis" fontFamily="Liberation Sans, Arial, sans-serif" fontSize="13" fontWeight="bold">
        <rect x="0" y="0" width="1" height="586" shapeRendering="crispEdges" />
        {prices.map((p, i) => (
          <text key={p} x="5" y={Math.max(13, majors[i] - 132 + 5)}>{p}</text>
        ))}
        <rect x="1" y="337" width="60" height="16" fill="#00ff00" />
        <text x="1" y="350" fill="#fff">2.8800001</text>
      </svg>
      <section aria-label="Cursor data" className="absolute top-[23px] left-[8px] w-[116px] border-2 border-t-[#ece9d8] border-l-[#ece9d8] border-b-[#716f64] border-r-[#716f64] bg-black font-['Liberation_Sans',sans-serif] text-[11px] leading-[12px] text-white">
        <h2 className="border-b border-white bg-[#00ff00] text-center leading-[11px] text-black">OK</h2>
        <table className="border-collapse">
          <tbody>
            {readout.map(([k, v]) => (
              <tr key={k}>
                <th scope="row" className="w-[43px] p-0 text-right font-normal whitespace-pre">{k}</th>
                <td className="p-0 pl-0.5 whitespace-pre">{v}</td>
              </tr>
            ))}
          </tbody>
        </table>
      </section>
    </main>
  );
}

/* ---------- status and task bars ---------- */

const cell = "flex h-4 items-center justify-center border-t border-l border-[#8f8c80]";

function StatusBar() {
  return (
    <footer className="flex h-[17px] shrink-0 items-center gap-[3px] border-t border-white">
      <p className="flex-1 pl-0.5">Sun May 27 19:32:42</p>
      <span className={cell + " w-[32px] bg-[#c0c0c0]"} />
      <span className={cell + " w-[29px] bg-[#c0c0c0]"} />
      <span className={cell + " w-[58px] bg-[#c0c0c0]"}>Sym 21</span>
      <span className={cell + " w-[52px] bg-[#00ff00]"}>OK</span>
      <span className={cell + " w-[44px] bg-[#00ff00]"}>OK</span>
      <Ic w={16} h={15}><path d="M1 15L15 1M5 15L15 5M9 15l6-6M13 15l2-2" stroke="#aca899" strokeWidth="2" /></Ic>
    </footer>
  );
}

const tasks: { text: string; icon: React.ReactNode; on?: boolean }[] = [
  {
    text: "CALDEIRÃO DE BOLS...",
    icon: (
      <svg width="16" height="16" viewBox="0 0 16 16" fill="none" aria-hidden="true"><circle cx="8" cy="8.500" r="5" stroke="#9fd8ff" strokeWidth="3" /><path d="M4 9h10" stroke="#9fd8ff" strokeWidth="2.500" /><path d="M11 11l5-.5v3z" fill="#3a81f3" /><path d="M1 15Q-1 11 6 5T15 2" stroke="#ffc020" strokeWidth="1.500" /></svg>
    ),
  },
  {
    text: "eSignal Data Manager",
    icon: <Ic w={16} h={16}><rect x="0.500" y="0.500" width="11" height="8" fill="#60b0e8" stroke="#d8d8d0" /><path d="M2 3.500h5M2 5.500h7" stroke="#ffff80" /><rect x="11.500" y="0.500" width="4" height="11" fill="#e0ddd0" stroke="#a0a098" /><path d="M2 10.500h8" stroke="#d8d8d0" strokeWidth="2" /><path d="M0 14.500h16" /><rect x="6" y="13" width="4" height="3" fill="#000" stroke="none" /></Ic>,
  },
  { text: "eSignal Page - HAWK...", on: true, icon: appIcon },
  {
    text: "João Fonseca - Conv...",
    icon: <svg width="16" height="16" viewBox="0 0 16 16" aria-hidden="true"><circle cx="6" cy="5" r="3.500" fill="#8fd060" /><path d="M0 15q0-6 6-6t6 6z" fill="#5fb040" /><path d="M4 11l2 4 2-4z" fill="#c0f090" /><ellipse cx="12" cy="3.500" rx="4" ry="3" fill="#f0f4ff" /><path d="M10 5l-1 3 4-2z" fill="#f0f4ff" /></svg>,
  },
  {
    text: "Mariachi Cobre - Mari...",
    icon: <svg width="16" height="16" viewBox="0 0 16 16" aria-hidden="true"><path d="M1 2h5l2 2h6v10H1z" fill="#f8d868" stroke="#a87820" /><path d="M5 6h7v7H5z" fill="#fff" stroke="#b08030" /><circle cx="10" cy="10" r="3" fill="#b8e0f0" stroke="#806030" /><path d="M12 12l3 3" stroke="#804020" strokeWidth="2" /></svg>,
  },
];

function TaskBar() {
  return (
    <div className="flex h-[30px] shrink-0 bg-[linear-gradient(180deg,#1f4fb8_0%,#4a8bee_6%,#2d69e0_15%,#245edb_50%,#2459d6_85%,#1941a5_100%)] text-white">
      <button type="button" className="flex w-[110px] shrink-0 items-center gap-1 rounded-r-[10px] bg-[linear-gradient(180deg,#2c6b2c_0%,#6cb86a_8%,#3f9a3c_22%,#389338_60%,#3c9e3a_85%,#2a7028_100%)] pl-[10px] font-['Liberation_Sans',sans-serif] text-[18px] leading-[24px] font-bold italic shadow-[inset_-4px_0_4px_#2c7029] [text-shadow:1px_1px_1px_#1c3a1c]">
        <svg width="19" height="18" viewBox="0 0 19 18" aria-hidden="true" className="shrink-0">
          <path d="M3 3q3-2 6 0L8 8Q5 6 2 8z" fill="#f0502a" /><path d="M10 3q3 2 7 0l-1 5q-4 2-7 0z" fill="#8cc63c" /><path d="M2 9q3-2 6 0l-1 5q-3-2-6 0z" fill="#4a8ae8" /><path d="M9 9q3 2 7 0l-1 5q-4 2-7 0z" fill="#fcd020" />
        </svg>
        Iniciar
      </button>
      <nav aria-label="Open windows" className="flex flex-1 items-center gap-0.5 pl-[10px]">
        {tasks.map((t) => (
          <button
            key={t.text}
            type="button"
            className={
              t.on
                ? "flex h-[24px] w-[158px] items-center gap-[3px] rounded-[2px] bg-[#1e52b7] pl-[10px] whitespace-nowrap shadow-[inset_1px_1px_2px_#12357e]"
                : "flex h-[24px] w-[158px] items-center gap-[3px] rounded-[2px] bg-[#3a81f3] pl-[10px] whitespace-nowrap shadow-[inset_1px_1px_1px_#6fa5f8,inset_-1px_-1px_1px_#2a62cc]"
            }
          >
            {t.icon}
            {t.text}
          </button>
        ))}
      </nav>
      <div className="flex shrink-0 items-center gap-[6px] pr-px">
        <span className="flex size-[19px] items-center justify-center rounded-[2px] bg-[#1846a0]">
          <Ic w={16} h={16}><path d="M1 5.500L7 1l4 4.500z" fill="#fff" /><path d="M14.500 1l-3 6-1 4" stroke="#fff" strokeWidth="3" /><path d="M14.500 2l-3 5-1 4" stroke="#000" /><circle cx="6" cy="11" r="3.500" fill="#fff" stroke="#102040" /></Ic>
        </span>
        <Ic w={14} h={15}><path d="M1.500 1.500h11v12h-11z" fill="#ffffe8" /><path d="M4.500 6V4.500l1-1h3l1 1v2l-2 2v1M7 11v2" strokeWidth="2" /></Ic>
      </div>
      <div className="relative ml-[15px] flex shrink-0 items-center gap-0.5 border-l border-[#0a3c98] bg-[linear-gradient(180deg,#0f70c8_0%,#2fb4f6_7%,#1590e8_20%,#1290e6_70%,#1a9ef0_88%,#0d6cc0_100%)] pr-[13px] pl-[14px]">
        <button type="button" aria-label="Show hidden icons" className="absolute -left-[10px] flex size-[18px] items-center justify-center rounded-full border border-[#a8d8ff] bg-[#2f86ee]">
          <svg width="8" height="9" viewBox="0 0 8 9" aria-hidden="true"><path d="M6 1L2 4.500 6 8" fill="none" stroke="#fff" strokeWidth="2" /></svg>
        </button>
        <Ic w={16} h={16}><rect x="1.500" y="0.500" width="13" height="9" fill="#30b050" stroke="#d8e8e0" /><path d="M8 10v4M1 13.500h14" stroke="#c0e0c0" /><rect x="5" y="12" width="6" height="4" fill="#208030" stroke="none" /></Ic>
        <svg width="16" height="16" viewBox="0 0 16 16" aria-hidden="true"><circle cx="8" cy="8" r="7.500" fill="#b81810" /><path d="M6 2Q2 8 8 13M9 2Q6 7 11 11M12 4q-2 3 1 5" fill="none" stroke="#ff8070" strokeWidth="1.200" /></svg>
        <svg width="16" height="16" viewBox="0 0 16 16" fill="none" aria-hidden="true"><path d="M3 12Q0 5 7 1M13 4q3 7-4 11" stroke="#00c8b0" strokeWidth="2" /><path d="M5 4.500h6v7H5z" stroke="#002830" strokeWidth="2" /><path d="M8 2v12" stroke="#00e0d0" strokeWidth="2" /></svg>
        <svg width="16" height="16" viewBox="0 0 16 16" aria-hidden="true"><circle cx="6" cy="4" r="3.500" fill="#a8e080" /><path d="M0 15q0-7 6-7t6 7z" fill="#70c050" /><circle cx="11" cy="11" r="4" fill="#e0e8e8" stroke="#688" /><path d="M11 8.500V11h2" stroke="#333" fill="none" /></svg>
        <Ic w={16} h={16}><rect x="1.500" y="0.500" width="13" height="10" fill="#808080" stroke="#202020" /><rect x="1" y="13" width="5" height="3" fill="#555" stroke="none" /><rect x="9" y="13" width="5" height="3" fill="#555" stroke="none" /></Ic>
        <time className="pl-1">19:32</time>
      </div>
    </div>
  );
}

export default function App() {
  return (
    <div className="flex min-h-screen flex-col bg-[#ece9d8] font-['Liberation_Sans',Arial,sans-serif] text-[11px] leading-[14px] text-black">
      <TitleBar />
      <MenuBar />
      <MainToolbar />
      <ChartToolbar />
      <IntervalBar />
      <Chart />
      <StatusBar />
      <TaskBar />
    </div>
  );
}
